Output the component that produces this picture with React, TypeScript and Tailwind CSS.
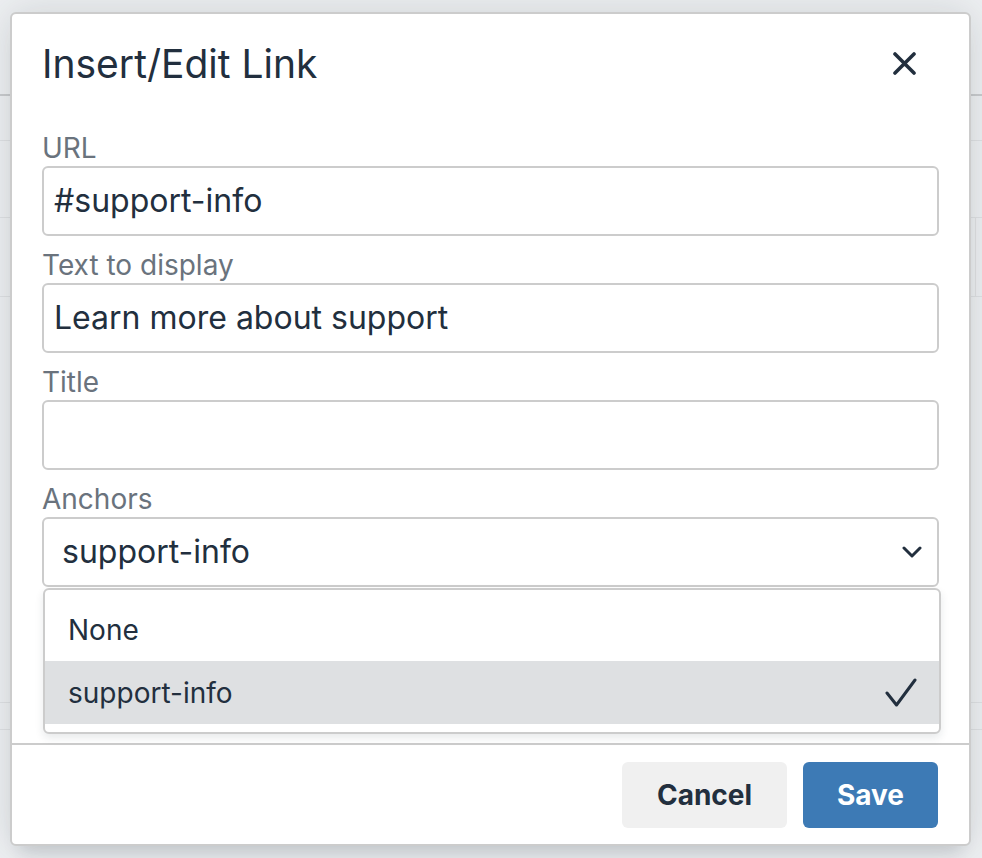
import React from "react";

const font = { fontFamily: "Inter, 'Noto Sans', 'Liberation Sans', sans-serif" };

function Field({ label, children }: { label: string; children: React.ReactNode }) {
  return (
    <div className="flex flex-col">
      <label className="h-[36px] flex items-center text-[28px] leading-[36px] text-[#6a737d]">{label}</label>
      {children}
    </div>
  );
}

function TextInput({ value }: { value: string }) {
  return (
    <div className="h-[70px] w-full border-2 border-[#cccccc] rounded-[6px] bg-white flex items-center px-[10px] text-[32px] text-[#222f3e]">
      {value}
    </div>
  );
}

export default function App() {
  return (
    <div className="relative w-[982px] h-[858px] overflow-hidden bg-[#eef0f2] antialiased" style={font}>
      {/* dimmed editor backdrop */}
      <div className="flex flex-col w-full">
        <div className="h-[96px] border-b-2 border-[#c9cbcd]" />
        <div className="h-[45px] border-b border-[#dfe1e3]" />
        <div className="h-[77px] border-b border-[#dfe1e3]" />
        <div className="h-[79px] border-b border-[#dfe1e3] flex justify-end">
          <div className="w-[7px] border-l border-[#dfe1e3]" />
        </div>
        <div className="h-[406px] border-b border-[#dfe1e3]" />
        <div className="h-[27px] border-b border-[#dfe1e3]" />
      </div>

      {/* dialog */}
      <div className="absolute left-[10px] top-[12px] w-[961px] h-[834px] bg-white border-2 border-[#cccccc] rounded-[6px] flex flex-col shadow-[0_16px_16px_-10px_rgba(34,47,62,0.15),0_0_40px_1px_rgba(34,47,62,0.15)]">
        <div className="h-[100px] flex items-center justify-between pl-[30px] pr-[52px] shrink-0">
          <h1 className="text-[39px] leading-[52px] text-[#222f3e] font-normal">Insert/Edit Link</h1>
          <svg width="24" height="24" viewBox="0 0 24 24" fill="none">
            <path d="M2 2 L21 21 M21 2 L2 21" stroke="#222f3e" strokeWidth="3.6" strokeLinecap="round" />
          </svg>
        </div>

        <div className="flex-1 px-[30px] pt-[16px] flex flex-col gap-[11px]">
          <Field label="URL">
            <TextInput value="#support-info" />
          </Field>
          <Field label="Text to display">
            <TextInput value="Learn more about support" />
          </Field>
          <Field label="Title">
            <TextInput value="" />
          </Field>
          <Field label="Anchors">
            <div className="relative">
              <div className="h-[70px] w-full border-2 border-[#cccccc] rounded-[6px] bg-white flex items-center justify-between pl-[18px] pr-[15px] text-[32px] text-[#222f3e]">
                <span>support-info</span>
                <svg width="20" height="12" viewBox="0 0 20 12" fill="none">
                  <path d="M2 2 L10 10 L18 2" stroke="#222f3e" strokeWidth="3" strokeLinecap="round" strokeLinejoin="round" />
                </svg>
              </div>
              <div className="absolute left-[1px] top-[71px] w-[898px] bg-white border-2 border-[#cccccc] rounded-[6px] py-[8px] z-10 shadow-[0_4px_8px_0_rgba(34,47,62,0.1)]">
                <div className="h-[63px] flex items-center px-[23px] text-[28px] text-[#222f3e]">None</div>
                <div className="h-[63px] flex items-center justify-between pl-[23px] pr-[22px] text-[28px] text-[#222f3e] bg-[#dee0e2]">
                  <span>support-info</span>
                  <svg width="32" height="30" viewBox="0 0 32 30" fill="none">
                    <path d="M2 15 L11.5 27 L30 2" stroke="#222f3e" strokeWidth="3" strokeLinecap="round" strokeLinejoin="round" />
                  </svg>
                </div>
              </div>
            </div>
          </Field>
        </div>

        <div className="h-[101px] shrink-0 border-t-2 border-[#cccccc] flex items-start justify-end gap-[16px] pt-[17px] pr-[31px]">
          <button className="h-[66px] w-[165px] rounded-[6px] bg-[#f0f0f0] text-[28px] font-bold text-[#222f3e]">Cancel</button>
          <button className="h-[66px] w-[135px] rounded-[6px] bg-[#3d7ab5] text-[28px] font-bold text-white">Save</button>
        </div>
      </div>
    </div>
  );
}
